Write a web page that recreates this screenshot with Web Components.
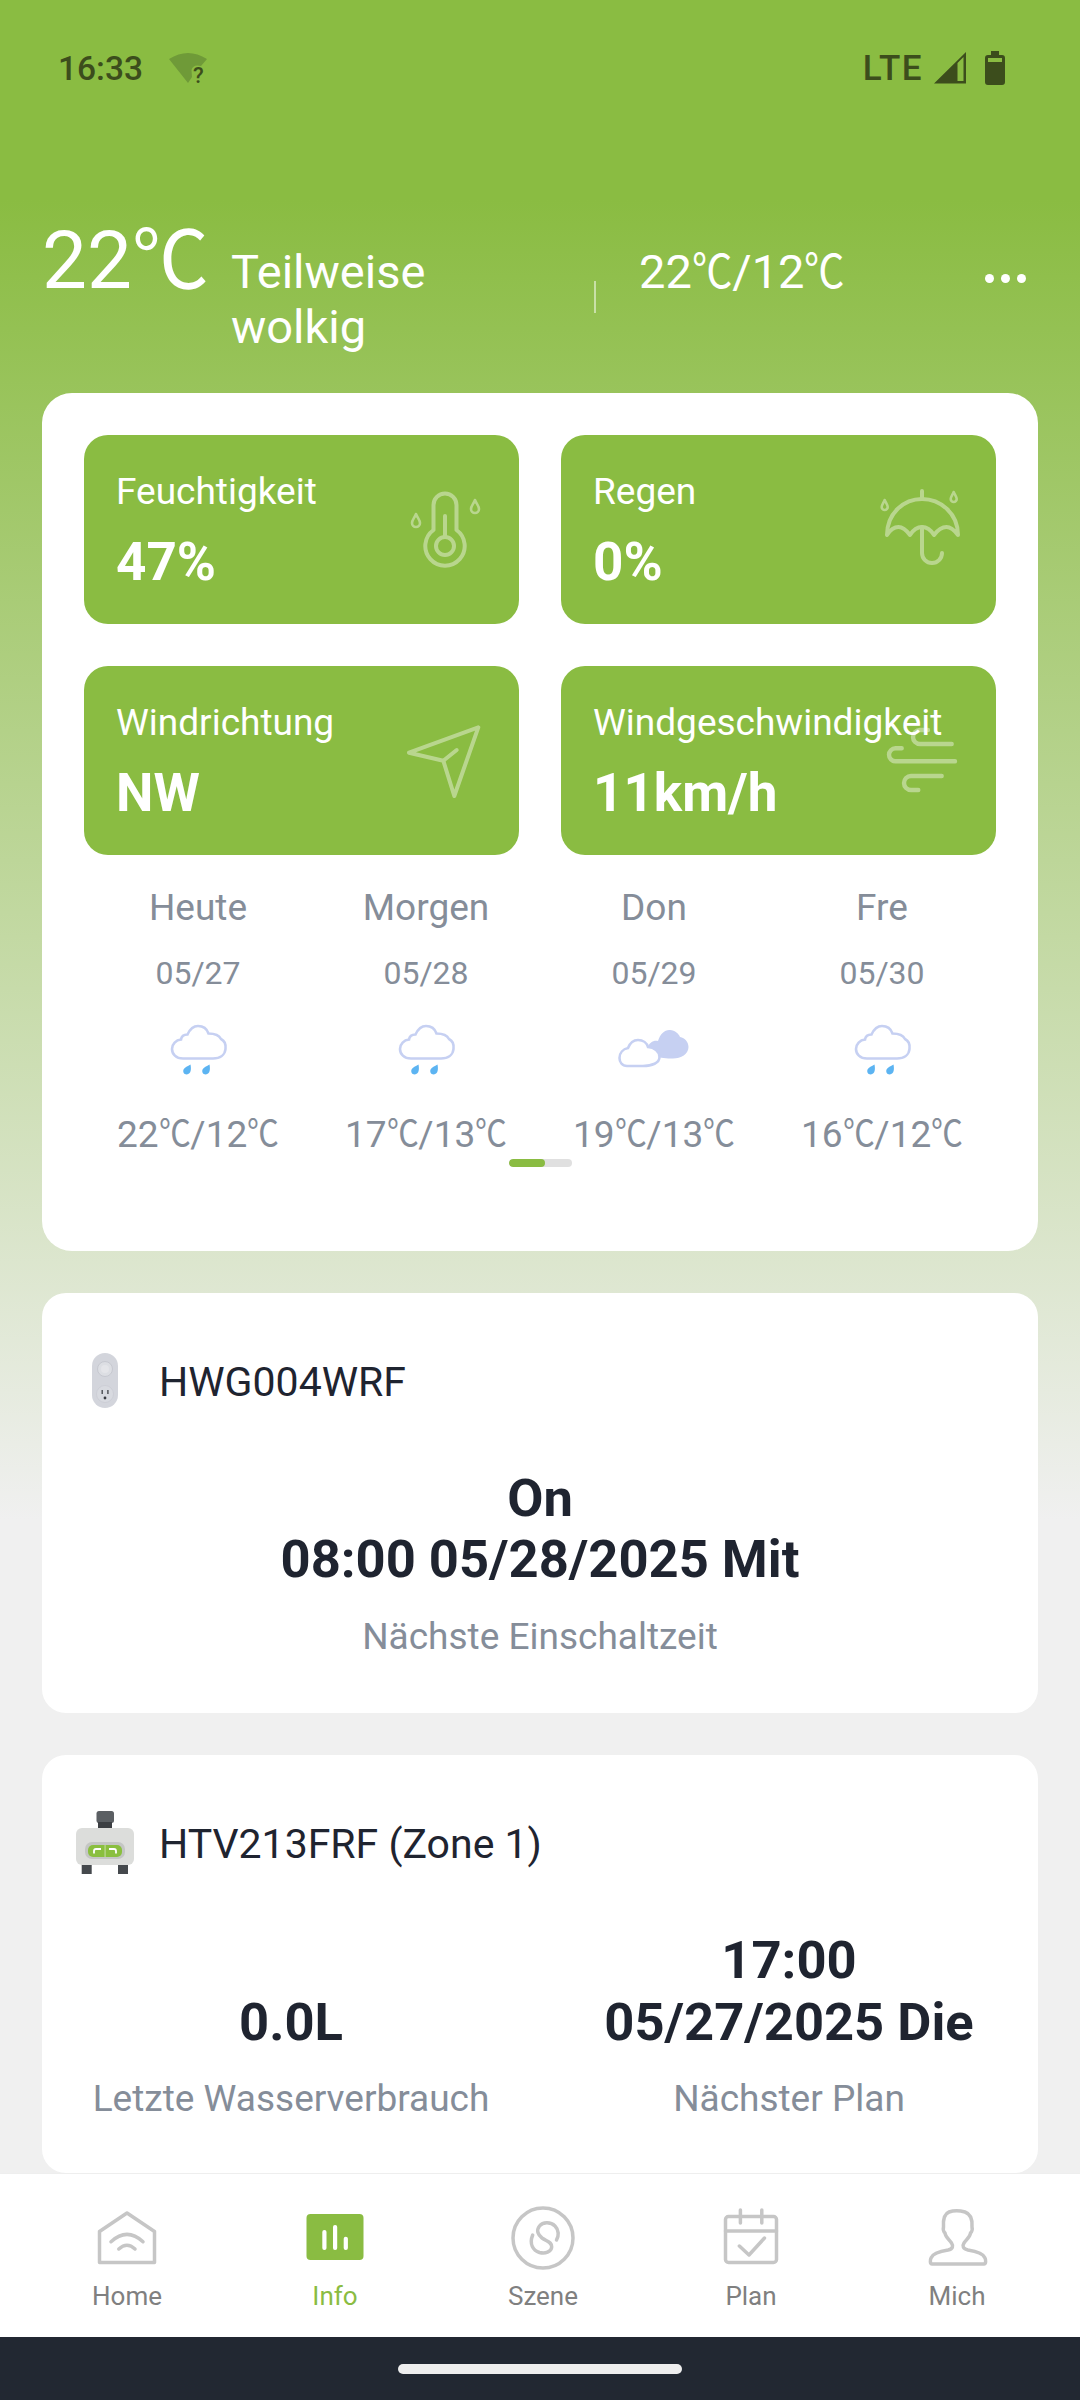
<!DOCTYPE html>
<html lang="de">
<head>
<meta charset="utf-8">
<title>Info</title>
<style>
  html, body { margin: 0; padding: 0; }
  body {
    width: 1080px;
    height: 2400px;
    overflow: hidden;
    font-family: Roboto, "Noto Sans CJK SC", sans-serif;
  }
</style>
</head>
<body>
<app-screen>
  <status-bar></status-bar>
  <weather-header></weather-header>

  <weather-panel>
    <stat-tile>
      <span slot="label">Feuchtigkeit</span>47%
      <svg slot="icon" width="84" height="84" viewBox="0 0 84 84" fill="none" stroke="#fff" stroke-width="4" stroke-linecap="round" stroke-linejoin="round">
        <path d="M28.5 45V20a11.5 11.5 0 0 1 23 0V45A19.7 19.7 0 1 1 28.5 45Z"/>
        <circle cx="40" cy="61" r="9"/>
        <path d="M40 31V52"/>
        <path stroke-width="2.6" d="M11 29c-1.5 4-4 6-4 9a4 4 0 0 0 8 0c0-3-2.5-5-4-9Z"/>
        <path stroke-width="2.6" d="M70 15c-1.5 4-4 6-4 9a4 4 0 0 0 8 0c0-3-2.5-5-4-9Z"/>
      </svg>
    </stat-tile>
    <stat-tile>
      <span slot="label">Regen</span>0%
      <svg slot="icon" width="84" height="84" viewBox="0 0 84 84" fill="none" stroke="#fff" stroke-width="4" stroke-linecap="round" stroke-linejoin="round">
        <path d="M5 50C5 28 22 14 40 14C58 14 76 28 76 50Q70 42 64.5 42Q58 42 52 50Q47 42 40 42Q33 42 28 50Q22 42 16.5 42Q10 42 5 50Z"/>
        <path d="M40 6V14M40 42V68a10 10 0 0 0 20 0"/>
        <path stroke-width="2.6" d="M2.7 15c-1.3 3-3 5-3 7a3 3 0 0 0 6 0c0-2-1.7-4-3-7Z"/>
        <path stroke-width="2.6" d="M71.7 7c-1.3 3-3 5-3 7a3 3 0 0 0 6 0c0-2-1.7-4-3-7Z"/>
      </svg>
    </stat-tile>
    <stat-tile>
      <span slot="label">Windrichtung</span>NW
      <svg slot="icon" width="84" height="84" viewBox="0 0 84 84" fill="none" stroke="#fff" stroke-width="4" stroke-linecap="round" stroke-linejoin="round">
        <path d="M73.3 11.3L4 36.7L38.3 44.7L49.3 80Z"/>
        <path d="M38.3 44.7L51.7 34"/>
      </svg>
    </stat-tile>
    <stat-tile>
      <span slot="label">Windgeschwindigkeit</span>11km/h
      <svg slot="icon" width="84" height="84" viewBox="0 0 84 84" fill="none" stroke="#fff" stroke-width="4.4" stroke-linecap="round" stroke-linejoin="round">
        <path d="M46 14H38a7 7 0 0 0 0 14H69.7"/>
        <path d="M19.7 32.3H13.5a6.5 6.5 0 0 0 0 13H73"/>
        <path d="M59.7 60H29a7 7 0 0 0 0 14H36.3"/>
      </svg>
    </stat-tile>

    <day-forecast slot="days" day="Heute" date="05/27" temps="22℃/12℃" kind="rain"></day-forecast>
    <day-forecast slot="days" day="Morgen" date="05/28" temps="17℃/13℃" kind="rain"></day-forecast>
    <day-forecast slot="days" day="Don" date="05/29" temps="19℃/13℃" kind="cloudy"></day-forecast>
    <day-forecast slot="days" day="Fre" date="05/30" temps="16℃/12℃" kind="rain"></day-forecast>
  </weather-panel>

  <device-card name="HWG004WRF" style="height:420px">
    <svg slot="icon" width="58" height="64" viewBox="0 0 58 64">
      <rect x="16" y="4" width="26" height="55" rx="13" fill="#d3d5dc"/>
      <circle cx="29" cy="20" r="7.5" fill="#dcdee3" stroke="#c6c8d0"/>
      <circle cx="29" cy="20" r="4" fill="#e4e5e9"/>
      <circle cx="29" cy="45" r="8.5" fill="#d8dae0" stroke="#c6c8d0" stroke-width=".6"/>
      <rect x="25.5" y="41" width="1.4" height="4" fill="#4a4c52"/>
      <rect x="31.2" y="41" width="1.4" height="4" fill="#4a4c52"/>
      <circle cx="29" cy="49" r="1.4" fill="#3a3c42"/>
    </svg>
    <next-switch>
      <span slot="value">On<br>08:00 05/28/2025 Mit</span>
      <span slot="caption">Nächste Einschaltzeit</span>
    </next-switch>
  </device-card>

  <device-card name="HTV213FRF (Zone 1)" style="height:418px">
    <svg slot="icon" width="58" height="64" viewBox="0 0 58 64">
      <rect x="20.5" y="0" width="17.5" height="12" rx="2.5" fill="#5b5f63"/>
      <rect x="22" y="11" width="14" height="6" fill="#3c3f43"/>
      <rect x="5.7" y="52" width="10" height="11" fill="#45494d"/>
      <rect x="42" y="52" width="10" height="11" fill="#45494d"/>
      <rect x="0" y="17" width="58" height="37" rx="6" fill="#dcdddb"/>
      <rect x="9" y="31" width="40" height="17" rx="7" fill="#c4c6c4"/>
      <rect x="12" y="34" width="34" height="12" rx="5" fill="#8abf3f"/>
      <rect x="28.7" y="34" width=".7" height="12" fill="#e4ecd6"/>
      <path d="M18 42.5v-2.5q0-2 2-2h5M40 42.5v-2.5q0-2-2-2h-5" fill="none" stroke="#fff" stroke-width="1.8"/>
    </svg>
    <plan-stats>
      <stat-col>
        <span slot="value">0.0L</span>
        <span slot="caption">Letzte Wasserverbrauch</span>
      </stat-col>
      <stat-col>
        <span slot="value">17:00<br>05/27/2025 Die</span>
        <span slot="caption">Nächster Plan</span>
      </stat-col>
    </plan-stats>
  </device-card>
</app-screen>

<tab-bar>
  <tab-item label="Home">
    <svg width="64" height="64" viewBox="0 0 64 64" fill="none" stroke="#c6c6c6" stroke-width="3.5" stroke-linejoin="round" stroke-linecap="round">
      <path d="M32 7L4.5 25.5V56.5H59.5V25.5Z"/>
      <path d="M16 35.7Q32 21 48 35.7M23.8 43Q32 35.5 40 43"/>
    </svg>
  </tab-item>
  <tab-item label="Info" active>
    <svg width="64" height="64" viewBox="0 0 64 64">
      <rect x="3.5" y="8" width="57" height="46" rx="4" fill="#8abc42"/>
      <rect x="19.3" y="24" width="4.2" height="20" rx="2" fill="#fff"/>
      <rect x="30" y="19" width="4.2" height="25" rx="2" fill="#fff"/>
      <rect x="40.7" y="30.7" width="4.2" height="13.3" rx="2" fill="#fff"/>
    </svg>
  </tab-item>
  <tab-item label="Szene">
    <svg width="64" height="64" viewBox="0 0 64 64" fill="none" stroke="#c6c6c6" stroke-width="3.5" stroke-linecap="round">
      <circle cx="32" cy="32" r="30"/>
      <path d="M45.5 34C48 30 48 24 44 20C40 16 32 15.5 28.5 20C25 24.5 27 29 31 32C36 35.5 41 36 40.7 41C40.4 46 34 48 28.5 46.5C22 44.5 18 38 21.7 29"/>
    </svg>
  </tab-item>
  <tab-item label="Plan">
    <svg width="64" height="64" viewBox="0 0 64 64" fill="none" stroke="#c6c6c6" stroke-width="3.5" stroke-linecap="round" stroke-linejoin="round">
      <rect x="6.5" y="10.5" width="51" height="46" rx="3"/>
      <path d="M6.5 25H57.5M21.4 4V17M42.8 4V17"/>
      <path d="M20.4 40L30 49L45.5 32"/>
    </svg>
  </tab-item>
  <tab-item label="Mich">
    <svg width="64" height="64" viewBox="0 0 64 64" fill="none" stroke="#c6c6c6" stroke-width="3.5" stroke-linejoin="round">
      <path d="M7 58H59C61 58 61 54 60 52C58 47 50 45 43 44C38 43 37 40 39 37C41 34 45 31 45.5 27C47 26 47.5 23 47 21C47.5 14 46 8 40 6C35 4.5 28 4.5 24 6C19 8 18 14 18.5 21C18 23 18.5 26 20 27C20.5 31 24.5 34 26.5 37C28.5 40 28 43 23 44C16 45 8 47 6 52C5 54 5 58 7 58Z"/>
    </svg>
  </tab-item>
</tab-bar>
<nav-handle></nav-handle>

<script>
// the degree sign comes from the CJK font, squeezed to the narrow width of the app's glyph
const DEG_STYLE = `.deg {
  display: inline-block;
  width: .86em;
  line-height: 1;
  font-family: "Noto Sans CJK SC", sans-serif;
  transform: scaleX(.86);
  transform-origin: 0 50%;
}`;
const withDeg = (text) => text.replace(/℃/g, `<span class="deg">℃</span>`);

class AppScreen extends HTMLElement {
  constructor() {
    super();
    this.attachShadow({ mode: "open" });
    this.shadowRoot.innerHTML = `
      <style>
        :host {
          display: flex;
          flex-direction: column;
          gap: 42px;
          height: 2173px;
          overflow: hidden;
          box-sizing: border-box;
          padding: 0 42px;
          background: linear-gradient(180deg, #8abc42 0, #8abc42 200px, #f0f0f0 1520px);
        }
      </style>
      <slot></slot>`;
  }
}

class StatusBar extends HTMLElement {
  constructor() {
    super();
    this.attachShadow({ mode: "open" });
    this.shadowRoot.innerHTML = `
      <style>
        :host {
          display: flex;
          align-items: center;
          flex: none;
          height: 136px;
          margin: 0 33px -42px 16px;
          color: #3c4d1c;
          font-size: 33.5px;
          font-weight: 500;
        }
        .wifi { margin-left: 26px; overflow: visible; }
        .lte { margin-left: auto; font-size: 35px; letter-spacing: 1.5px; }
        .signal { margin-left: 10px; }
        .battery { margin-left: 18px; }
        svg { display: block; }
      </style>
      <span>16:33</span>
      <svg class="wifi" width="40" height="32" viewBox="0 0 40 32">
        <path d="M0 7Q19 -5 38 7L32 14Q24 12 22.5 18L23 25L19 31Z" fill="#6f9a38"/>
        <text x="24" y="31" font-size="22" font-weight="500" fill="#3c4d1c" font-family="Roboto">?</text>
      </svg>
      <span class="lte">LTE</span>
      <svg class="signal" width="34" height="32" viewBox="0 0 34 32">
        <path fill-rule="evenodd" d="M1 31.5L33 0V31.5ZM24.5 11V29H30.5V5Z" fill="#3c4d1c"/>
      </svg>
      <svg class="battery" width="20" height="34" viewBox="0 0 20 34">
        <path fill-rule="evenodd" d="M6 0H14V4H17a3 3 0 0 1 3 3V31a3 3 0 0 1-3 3H3a3 3 0 0 1-3-3V7a3 3 0 0 1 3-3H6ZM3 7V11H17V7Z" fill="#3c4d1c"/>
      </svg>`;
  }
}

class WeatherHeader extends HTMLElement {
  constructor() {
    super();
    this.attachShadow({ mode: "open" });
    this.shadowRoot.innerHTML = `
      <style>
        :host {
          display: flex;
          align-items: flex-start;
          flex: none;
          height: 257px;
          margin-bottom: -42px;
          color: #fff;
        }
        ${DEG_STYLE}
        .now { width: 189px; font-size: 80px; line-height: 100px; margin-top: 75px; white-space: nowrap; }
        .now .deg { width: .96em; transform: scaleX(.96); }
        .sky { width: 300px; font-size: 47px; line-height: 55px; margin-top: 108px; }
        .sep { width: 2px; height: 32px; background: rgba(255,255,255,.5); margin: 145px 0 0 63px; }
        .range { font-size: 47px; line-height: 55px; margin: 108px 0 0 43px; white-space: nowrap; }
        .more { display: flex; gap: 7px; margin: 138px 12px 0 auto; }
        .more i { width: 9px; height: 9px; border-radius: 50%; background: #fff; }
      </style>
      <div class="now">${withDeg("22℃")}</div>
      <div class="sky">Teilweise wolkig</div>
      <div class="sep"></div>
      <div class="range">${withDeg("22℃/12℃")}</div>
      <div class="more"><i></i><i></i><i></i></div>`;
  }
}

class WeatherPanel extends HTMLElement {
  constructor() {
    super();
    this.attachShadow({ mode: "open" });
    this.shadowRoot.innerHTML = `
      <style>
        :host {
          display: block;
          height: 858px;
          box-sizing: border-box;
          padding: 42px;
          background: #fff;
          border-radius: 30px;
          flex: none;
        }
        .tiles { display: grid; grid-template-columns: 1fr 1fr; gap: 42px; }
        .days { display: grid; grid-template-columns: repeat(4, 228px); padding-top: 29px; }
        .scroll { width: 63px; height: 8px; margin: 0 auto; border-radius: 4px; background: #e0e0e0; overflow: hidden; }
        .scroll i { display: block; width: 36px; height: 8px; border-radius: 4px; background: #8abc42; }
      </style>
      <div class="tiles"><slot></slot></div>
      <div class="days"><slot name="days"></slot></div>
      <div class="scroll"><i></i></div>`;
  }
}

class StatTile extends HTMLElement {
  constructor() {
    super();
    this.attachShadow({ mode: "open" });
    this.shadowRoot.innerHTML = `
      <style>
        :host {
          display: block;
          position: relative;
          height: 189px;
          box-sizing: border-box;
          padding: 33px 32px 0;
          border-radius: 24px;
          background: #8abc42;
          color: #fff;
          font-size: 53px;
          line-height: 60px;
          font-weight: 700;
        }
        .label { font-size: 37px; line-height: 48px; font-weight: 400; margin-bottom: 16px; white-space: nowrap; }
        .icon { position: absolute; top: 50px; right: 30px; width: 84px; height: 84px; opacity: .4; }
        ::slotted(svg) { display: block; overflow: visible; }
      </style>
      <div class="label"><slot name="label"></slot></div>
      <slot></slot>
      <div class="icon"><slot name="icon"></slot></div>`;
  }
}

const WEATHER_ICONS = {
  rain: `
    <path d="M18 36.5C11 36.5 7 32 7 27C7 22 11 18 16 17.5C16.5 14 19 12.5 22.5 12.5C25 7 29 4 33 4C38 4 42 7 43.5 11.5C50 11.5 54 13 56 17C60 19 61 23 60.5 27C60 33 55 36.5 48 36.5Z" fill="none" stroke="#c6d0f2" stroke-width="2.6"/>
    <path d="M25.5 42.5c.8 4 1 9.5-3.8 10c-3 0-4.2-3-3-5.2c1-2 4-3 6.8-4.8z" fill="#5cb4f2"/>
    <path d="M44.5 42.5c.8 4 1 9.5-3.8 10c-3 0-4.2-3-3-5.2c1-2 4-3 6.8-4.8z" fill="#5cb4f2"/>`,
  cloudy: `
    <path d="M26 27C28 20 33 18 37 19C39 12 44 7.5 49 8C54 8 58 12 59 15C64 16 67.5 20 67.5 25C67.5 32 60 36.5 52 36.5C46 36.5 38 36 36 34Z" fill="#c6d0f2"/>
    <path d="M6 44C1 44 -1.5 40 -1.5 36C-1.5 31 2 27 7 26C9 21 13 18 17 18C22 18 26 21 27 25C33 25.5 38.5 29 38.5 35C38.5 41 31 44 22 44Z" fill="#fff" stroke="#c6d0f2" stroke-width="2.6"/>`
};

class DayForecast extends HTMLElement {
  constructor() {
    super();
    this.attachShadow({ mode: "open" });
    this.shadowRoot.innerHTML = `
      <style>
        :host {
          display: flex;
          flex-direction: column;
          align-items: center;
          color: #858d99;
          font-size: 37px;
          line-height: 48px;
        }
        ${DEG_STYLE}
        .date { font-size: 32px; line-height: 40px; margin: 21px 0 29px; }
        svg { display: block; overflow: visible; margin-bottom: 33px; }
        .temps { white-space: nowrap; height: 48px; }
      </style>
      <div>${this.getAttribute("day")}</div>
      <div class="date">${this.getAttribute("date")}</div>
      <svg width="66" height="56" viewBox="0 0 66 56">${WEATHER_ICONS[this.getAttribute("kind")]}</svg>
      <div class="temps">${withDeg(this.getAttribute("temps"))}</div>`;
  }
}

class DeviceCard extends HTMLElement {
  constructor() {
    super();
    this.attachShadow({ mode: "open" });
    this.shadowRoot.innerHTML = `
      <style>
        :host {
          display: block;
          flex: none;
          box-sizing: border-box;
          padding-top: 56px;
          background: #fff;
          border-radius: 24px;
        }
        .head { display: flex; align-items: center; height: 64px; color: #1f2430; font-size: 41px; }
        .icon { width: 83px; margin-left: 34px; }
        .name { padding-top: 2px; }
        ::slotted(svg) { display: block; }
      </style>
      <div class="head">
        <div class="icon"><slot name="icon"></slot></div>
        <span class="name">${this.getAttribute("name")}</span>
      </div>
      <slot></slot>`;
  }
}

class NextSwitch extends HTMLElement {
  constructor() {
    super();
    this.attachShadow({ mode: "open" });
    this.shadowRoot.innerHTML = `
      <style>
        :host { display: block; text-align: center; padding-top: 55px; }
        .value { color: #1f2430; font-size: 52.5px; line-height: 61px; font-weight: 700; }
        .caption { color: #858d99; font-size: 37px; line-height: 48px; margin-top: 23px; }
      </style>
      <div class="value"><slot name="value"></slot></div>
      <div class="caption"><slot name="caption"></slot></div>`;
  }
}

class PlanStats extends HTMLElement {
  constructor() {
    super();
    this.attachShadow({ mode: "open" });
    this.shadowRoot.innerHTML = `
      <style>
        :host { display: grid; grid-template-columns: 1fr 1fr; align-items: end; padding-top: 54px; }
      </style>
      <slot></slot>`;
  }
}

class StatCol extends HTMLElement {
  constructor() {
    super();
    this.attachShadow({ mode: "open" });
    this.shadowRoot.innerHTML = `
      <style>
        :host { display: block; text-align: center; }
        .value { color: #1f2430; font-size: 52.5px; line-height: 62px; font-weight: 700; }
        .caption { color: #858d99; font-size: 37px; line-height: 48px; margin-top: 22px; }
      </style>
      <div class="value"><slot name="value"></slot></div>
      <div class="caption"><slot name="caption"></slot></div>`;
  }
}

class TabBar extends HTMLElement {
  constructor() {
    super();
    this.attachShadow({ mode: "open" });
    this.shadowRoot.innerHTML = `
      <style>
        :host {
          display: grid;
          grid-template-columns: repeat(4, 208px) 204px;
          height: 164px;
          box-sizing: border-box;
          padding: 32px 0 0 23px;
          background: #fff;
          border-top: 1px solid #eeeeee;
        }
      </style>
      <slot></slot>`;
  }
}

class TabItem extends HTMLElement {
  constructor() {
    super();
    this.attachShadow({ mode: "open" });
    const active = this.hasAttribute("active");
    this.shadowRoot.innerHTML = `
      <style>
        :host {
          display: flex;
          flex-direction: column;
          align-items: center;
          gap: 10px;
          color: ${active ? "#8abc42" : "#808080"};
          font-size: 26px;
          line-height: 32px;
        }
        ::slotted(svg) { display: block; }
      </style>
      <slot></slot>
      <span>${this.getAttribute("label")}</span>`;
  }
}

class NavHandle extends HTMLElement {
  constructor() {
    super();
    this.attachShadow({ mode: "open" });
    this.shadowRoot.innerHTML = `
      <style>
        :host {
          display: flex;
          justify-content: center;
          height: 63px;
          box-sizing: border-box;
          padding-top: 27px;
          background: #222832;
        }
        i { width: 284px; height: 10px; border-radius: 5px; background: #eeeeee; }
      </style>
      <i></i>`;
  }
}

customElements.define("app-screen", AppScreen);
customElements.define("status-bar", StatusBar);
customElements.define("weather-header", WeatherHeader);
customElements.define("weather-panel", WeatherPanel);
customElements.define("stat-tile", StatTile);
customElements.define("day-forecast", DayForecast);
customElements.define("device-card", DeviceCard);
customElements.define("next-switch", NextSwitch);
customElements.define("plan-stats", PlanStats);
customElements.define("stat-col", StatCol);
customElements.define("tab-bar", TabBar);
customElements.define("tab-item", TabItem);
customElements.define("nav-handle", NavHandle);
</script>
</body>
</html>
